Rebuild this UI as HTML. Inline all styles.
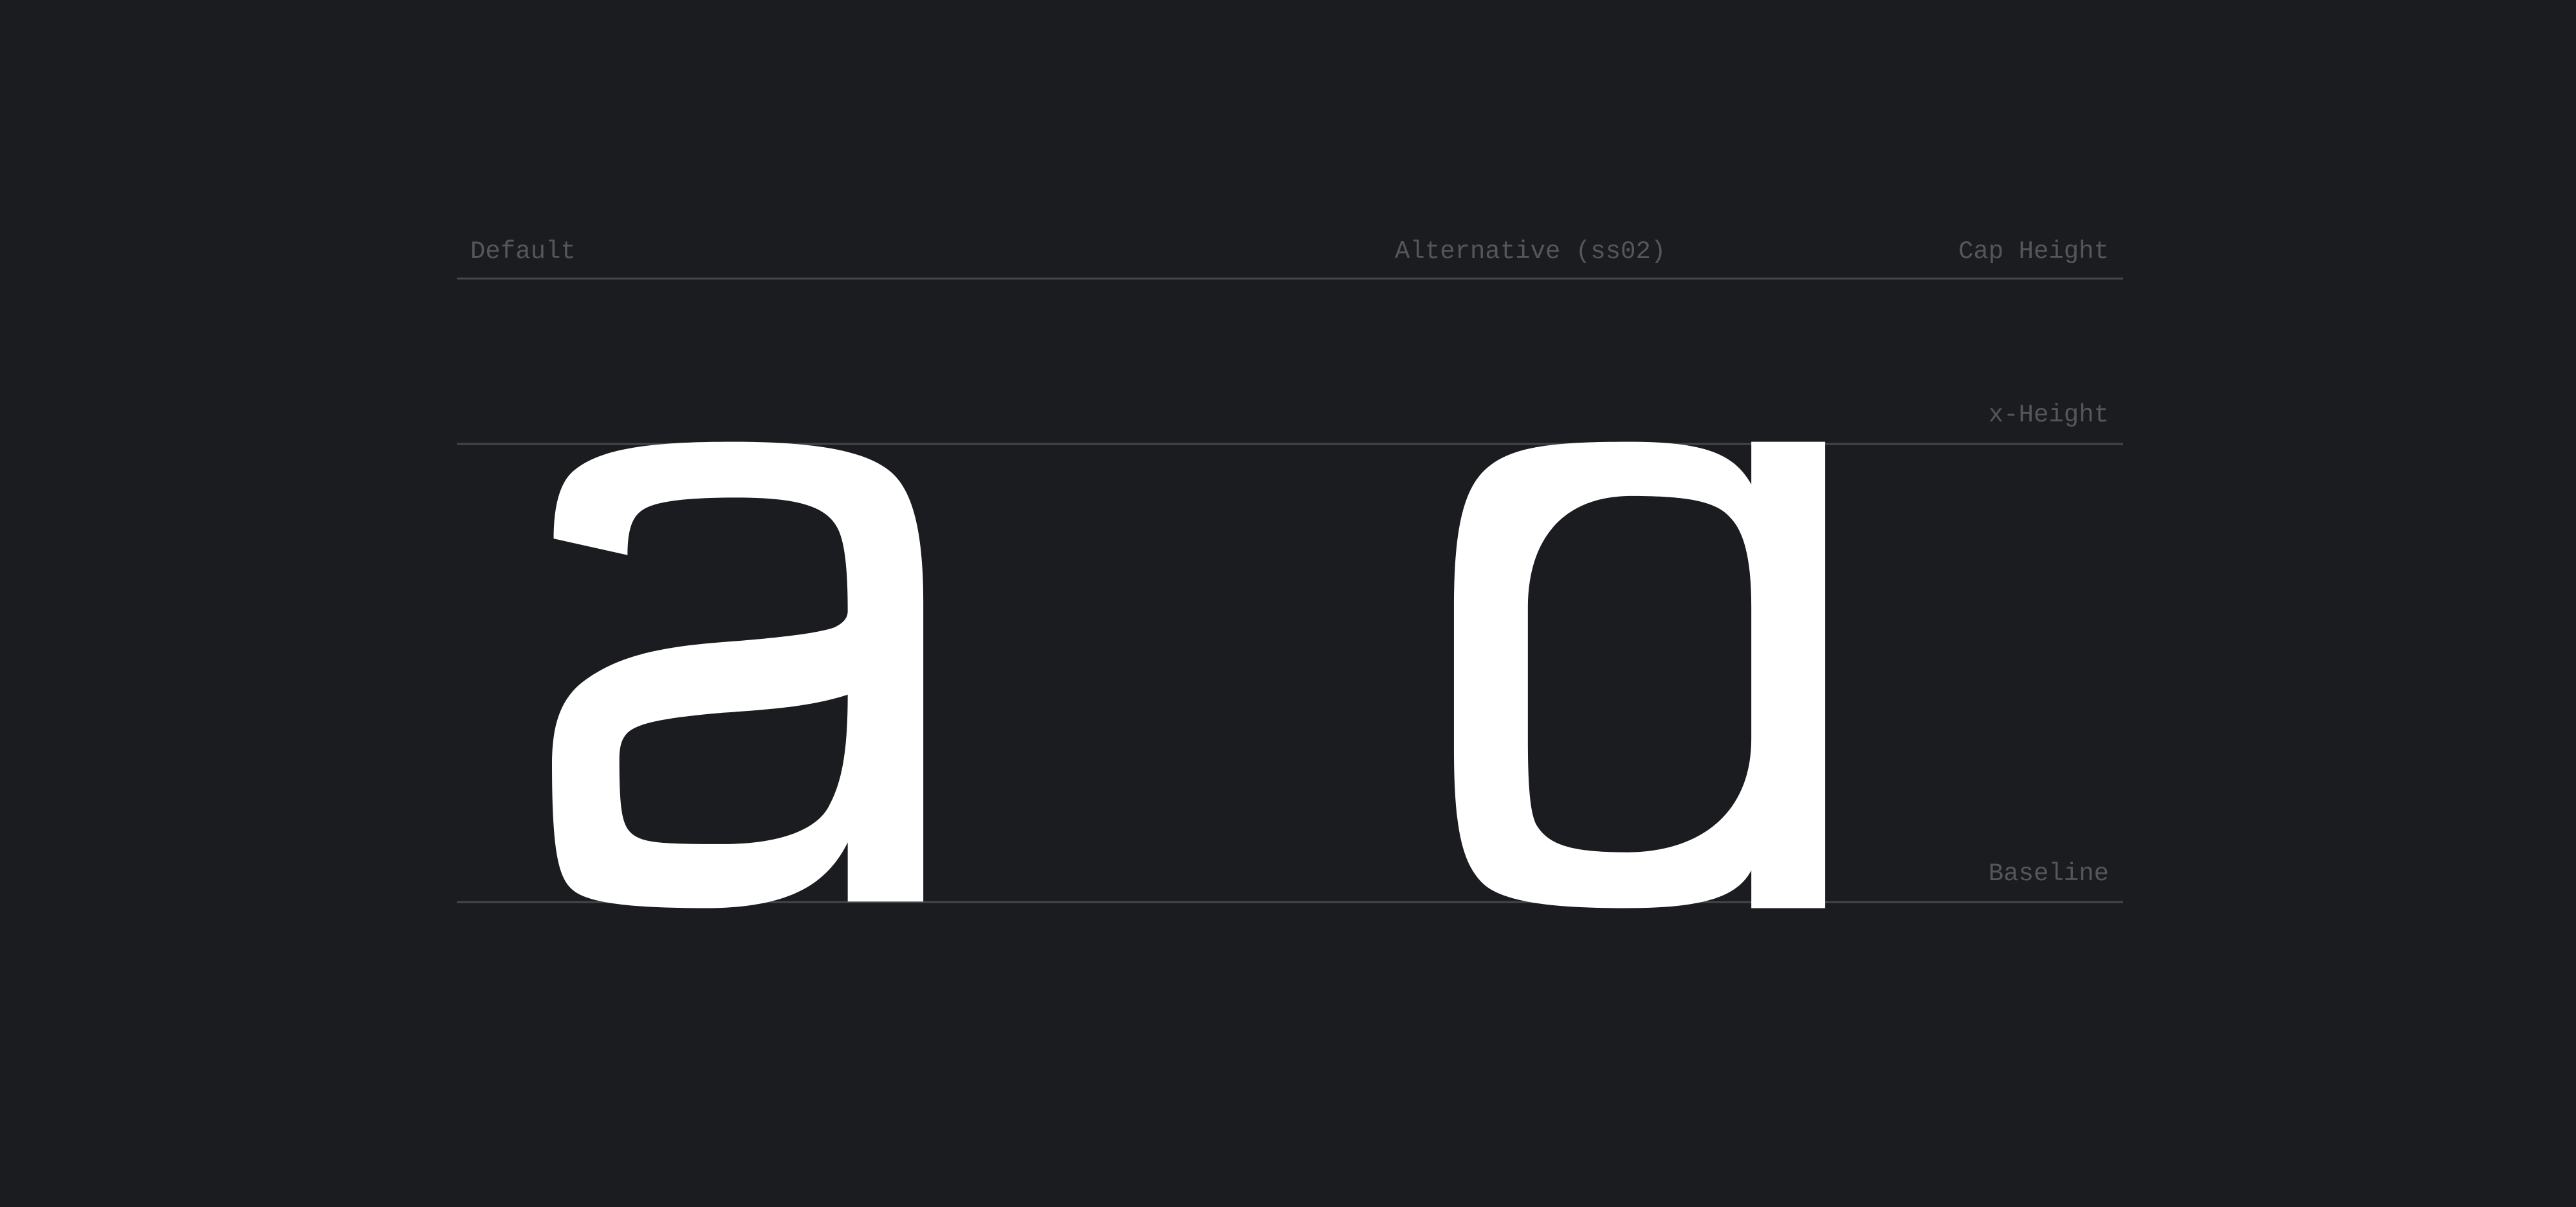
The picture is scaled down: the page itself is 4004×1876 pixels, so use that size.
<!DOCTYPE html>
<html><head><meta charset="utf-8"><style>
html,body{margin:0;padding:0;background:#1b1c20;}
svg{display:block}
</style></head><body>
<svg width="4004" height="1876" viewBox="0 0 4004 1876" xmlns="http://www.w3.org/2000/svg">
<rect width="4004" height="1876" fill="#1b1c20"/>
<g stroke="#45464b" stroke-width="3">
<line x1="710" y1="433" x2="3300" y2="433"/>
<line x1="710" y1="690" x2="3300" y2="690"/>
<line x1="710" y1="1402" x2="3300" y2="1402"/>
</g>
<g font-family="Liberation Mono, monospace" font-size="39" fill="#55565b">
<text x="731" y="401">Default</text>
<text x="2168" y="401">Alternative (ss02)</text>
<text x="3278" y="401" text-anchor="end">Cap Height</text>
<text x="3278" y="655" text-anchor="end">x-Height</text>
<text x="3278" y="1368" text-anchor="end">Baseline</text>
</g>
<g transform="scale(2.5536,2.5524)" fill="#ffffff" fill-rule="evenodd">
<path d="M337,328 C337,305 342,292 350,286 C365,274 392,269 445,269 C495,269 530,274 545,290 C556,302 562,325 562,367 L562,549 L516,549 L516,513 C505,535 485,553 430,553 C385,553 360,550 350,543 C340,536 336,520 336,465 C336,440 342,425 355,415 C375,400 400,394 440,391 C480,388 500,385 508,382 C514,379 516,376 516,372 C516,345 514,330 510,322 C503,308 485,303 448,303 C420,303 400,305 392,310 C385,314 382,322 382,338 Z
M516,423 C495,430 470,432 440,434 C405,437 392,440 385,444 C378,448 377,455 377,463 C377,495 379,503 385,508 C392,513 400,514 440,514 C475,514 498,505 505,490 C513,475 516,455 516,423 Z"/>
<path d="M1066,295 C1055,275 1035,269 990,269 C940,269 918,273 904,286 C890,299 885,325 885,370 L885,455 C885,505 890,528 905,540 C920,551 955,553 990,553 C1040,553 1058,545 1066,530 L1066,553 L1111,553 L1111,269 L1066,269 Z
M993,302 C1030,302 1045,306 1053,315 C1063,325 1066,345 1066,370 L1066,450 C1066,495 1035,519 990,519 C955,519 942,514 935,502 C931,494 930,475 930,450 L930,370 C930,330 950,302 993,302 Z"/>
</g>
</svg>
</body></html>
